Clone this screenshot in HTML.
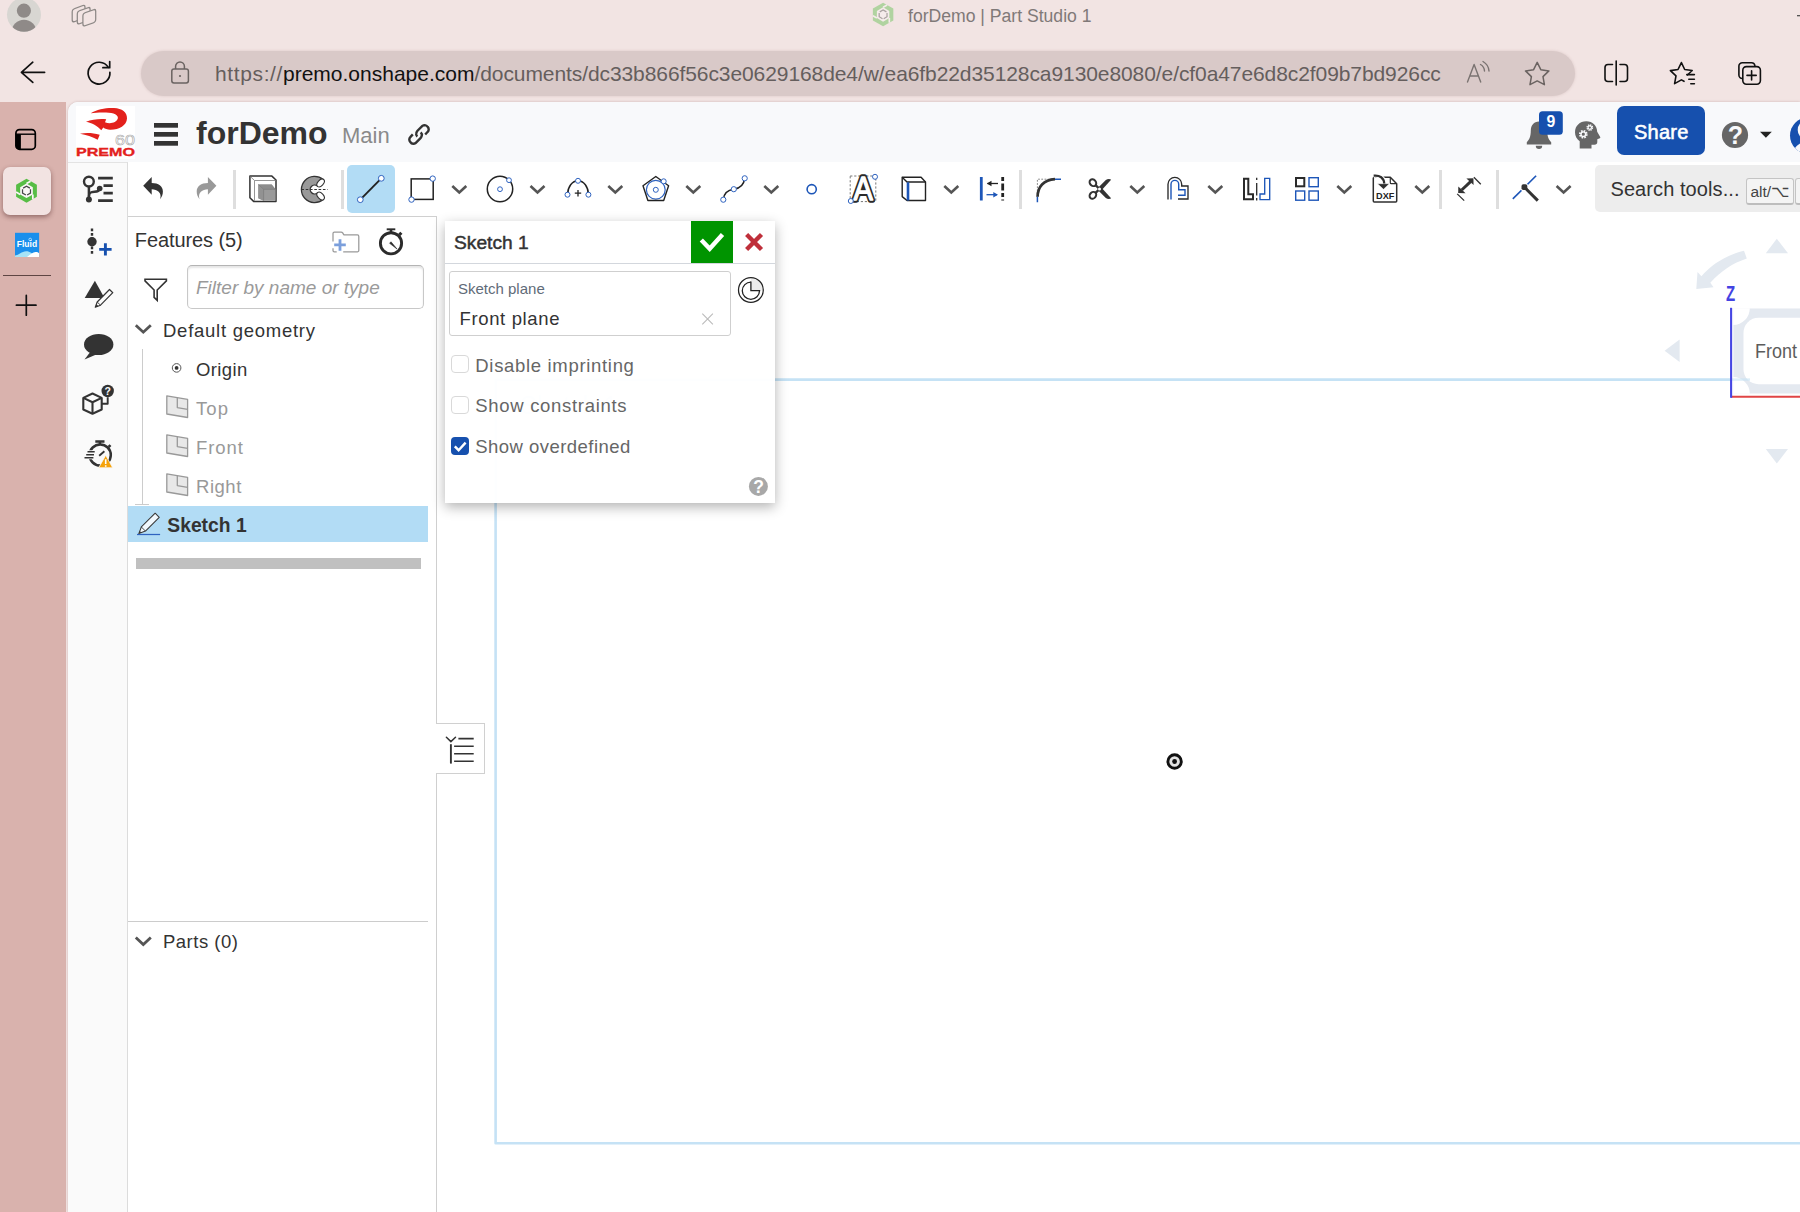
<!DOCTYPE html>
<html lang="en">
<head>
<meta charset="utf-8">
<title>forDemo | Part Studio 1</title>
<style>
html,body{margin:0;padding:0;background:#f2e4e3;}
body{width:1800px;height:1212px;overflow:hidden;position:relative;font-family:"Liberation Sans",sans-serif;color:#333;}
.a{position:absolute;}
.t{position:absolute;white-space:nowrap;line-height:1;}
#ov{position:absolute;left:0;top:0;width:1800px;height:1212px;pointer-events:none;}
</style>
</head>
<body>
<!-- ===== browser chrome ===== -->
<div class="a" id="urlbar" style="left:141px;top:51px;width:1434px;height:45px;border-radius:23px;background:#d9c9c8;box-shadow:0 0 3px rgba(120,80,80,.18)"></div>
<div class="t" id="url" style="left:215px;top:63px;font-size:21px;color:#655e5d"><span style="letter-spacing:.62px">https://</span><span style="color:#111">premo.onshape.com</span><span style="letter-spacing:-.085px">/documents/dc33b866f56c3e0629168de4/w/ea6fb22d35128ca9130e8080/e/cf0a47e6d8c2f09b7bd926cc</span></div>
<div class="t" id="tabtitle" style="left:908px;top:7.700px;font-size:17.600px;color:#807978">forDemo | Part Studio 1</div>

<!-- ===== left browser sidebar ===== -->
<div class="a" style="left:0;top:102px;width:66px;height:1110px;background:#d9b2ad"></div>
<div class="a" style="left:66px;top:102px;width:4px;height:1110px;background:#f2e4e3"></div>
<div class="a" id="acttab" style="left:3px;top:167px;width:48px;height:48px;border-radius:7px;background:#f2e3e2;box-shadow:0 2px 5px rgba(60,20,20,.45)"></div>
<div class="a" style="left:3px;top:274.700px;width:48px;height:1.200px;background:#5e4543"></div>

<!-- ===== page ===== -->
<div class="a" id="page" style="left:68px;top:102px;width:1732px;height:1110px;background:#fff;border-top-left-radius:10px;box-shadow:0 0 2.500px rgba(90,40,40,.28)"></div>
<div class="a" id="hdr" style="left:68px;top:102px;width:1732px;height:60px;background:#f8f9fb;border-top-left-radius:10px"></div>
<div class="a" id="logo" style="left:76px;top:106px;width:59px;height:53px;background:#fff"></div>
<div class="t" id="docname" style="left:196px;top:116.500px;font-size:32px;font-weight:700;color:#333">forDemo</div>
<div class="t" id="branch" style="left:342px;top:125px;font-size:22px;color:#8a8a8a">Main</div>
<div class="a" id="share" style="left:1617px;top:106px;width:88px;height:49px;border-radius:7px;background:#1650ae"></div>
<div class="t" id="sharet" style="left:1634px;top:122px;font-size:20px;font-weight:400;color:#fff;-webkit-text-stroke:.55px #fff;letter-spacing:.25px">Share</div>

<!-- side toolbar -->
<div class="a" id="sidebar" style="left:68px;top:162px;width:59px;height:1050px;background:#fafafa;border-top:1px solid #e3e3e3;border-right:1px solid #dcdcdc;box-sizing:content-box"></div>

<!-- toolbar -->
<div class="a" style="left:233px;top:170px;width:2.700px;height:39px;background:#dedede"></div>
<div class="a" style="left:341px;top:170px;width:2.700px;height:39px;background:#dedede"></div>
<div class="a" style="left:1019px;top:170px;width:2.700px;height:39px;background:#dedede"></div>
<div class="a" style="left:1439px;top:170px;width:2.700px;height:39px;background:#dedede"></div>
<div class="a" style="left:1496px;top:170px;width:2.700px;height:39px;background:#dedede"></div>
<div class="a" id="linetool" style="left:347px;top:165px;width:48px;height:48px;border-radius:5px;background:#b2dcf5"></div>
<div class="a" id="search" style="left:1595px;top:165px;width:215px;height:47px;border-radius:5px;background:#ededed"></div>
<div class="t" id="searcht" style="left:1610.500px;top:179px;font-size:20px;color:#333;letter-spacing:.08px">Search tools...</div>
<div class="a" id="kbd1" style="left:1746px;top:177.700px;width:47.500px;height:27.500px;border-radius:3px;background:#f4f4f4;border:1px solid #c4c4c4;border-bottom:2px solid #bdbdbd;box-sizing:border-box"></div>
<div class="t" id="kbdt" style="left:1750.500px;top:183.500px;font-size:15.500px;color:#444">alt/⌥</div>
<div class="a" id="kbd2" style="left:1795px;top:177.700px;width:20px;height:27.500px;border-radius:3px;background:#f4f4f4;border:1px solid #c4c4c4;border-bottom:2px solid #bdbdbd;box-sizing:border-box"></div>

<!-- feature panel -->
<div class="a" id="fpanel" style="left:128px;top:216px;width:308px;height:996px;background:#fff;border-top:1px solid #d0d0d0;border-right:1px solid #cfcfcf"></div>
<div class="t" id="feat" style="left:134.800px;top:230px;font-size:20px;color:#333;letter-spacing:-.1px">Features (5)</div>
<div class="a" id="filter" style="left:187px;top:265px;width:237px;height:44px;box-sizing:border-box;border:1.500px solid #c8c8c8;border-top-color:#b4b4b4;border-radius:5px;background:#fff;box-shadow:inset 0 2px 2px rgba(0,0,0,.10)"></div>
<div class="t" id="filtert" style="left:196px;top:278px;font-size:19px;font-style:italic;color:#9a9a9a">Filter by name or type</div>
<div class="t" id="defgeo" style="left:163px;top:321.500px;font-size:18.500px;color:#333;letter-spacing:.74px">Default geometry</div>
<div class="a" style="left:142px;top:349px;width:1px;height:156px;background:#ccc"></div>
<div class="a" style="left:135px;top:504px;width:14px;height:1px;background:#ccc"></div>
<div class="t" id="origin" style="left:196px;top:360.900px;font-size:18.500px;color:#333;letter-spacing:.38px">Origin</div>
<div class="t" id="ptop" style="left:196px;top:399.800px;font-size:18.500px;color:#999;letter-spacing:1.100px">Top</div>
<div class="t" id="pfront" style="left:196px;top:438.900px;font-size:18.500px;color:#999;letter-spacing:.9px">Front</div>
<div class="t" id="pright" style="left:196px;top:478px;font-size:18.500px;color:#999;letter-spacing:.53px">Right</div>
<div class="a" id="selrow" style="left:128px;top:506px;width:300px;height:36px;background:#b2dcf5"></div>
<div class="t" id="sk1" style="left:167.300px;top:515.600px;font-size:19.300px;font-weight:700;color:#333">Sketch 1</div>
<div class="a" id="gbar" style="left:136px;top:558px;width:285px;height:11px;background:#c0c0c0"></div>
<div class="a" style="left:128px;top:921px;width:300px;height:1px;background:#ccc"></div>
<div class="t" id="parts" style="left:163px;top:933.200px;font-size:18.500px;color:#333;letter-spacing:.49px">Parts (0)</div>
<div class="a" id="tabbtn" style="left:436px;top:723px;width:49px;height:51px;box-sizing:border-box;border:1px solid #d0d0d0;border-left:none;background:#fff"></div>

<svg class="a" style="left:0;top:0" width="1800" height="1212" viewBox="0 0 1800 1212" fill="none">
<!-- ===== canvas ===== -->
<g id="canvas">
  <path d="M1731 379.600H495.600V1143.300H1800" stroke="#c5e2f5" stroke-width="2.600" stroke-linejoin="round"/>
  <text x="520" y="414" font-family="Liberation Sans, sans-serif" font-size="25" fill="#bfdff5">Sketch 1</text>
  <circle cx="1174.600" cy="761.500" r="6.700" stroke="#111" stroke-width="2.900" fill="#e4e4e4"/>
  <circle cx="1174.600" cy="761.500" r="2.400" fill="#111"/>
</g>
<!-- ===== view cube ===== -->
<g id="viewcube">
  <path d="M1776.800 238.800l11.200 14.400h-22.200z" fill="#e3e9f0"/>
  <path d="M1776.800 463.600l11.200-14.600h-22.200z" fill="#e3e9f0"/>
  <path d="M1664.600 350.800l15-11.200v22.400z" fill="#e3e9f0"/>
  <path d="M1744 250.800l2.800 7.600c-14 4.600-26 12.500-36.500 24.300l3.200 4.600-17.200 1.700 1.200-17 3.900 4.300c10.500-12.200 25-21.300 42.600-25.500z" fill="#e3e9f0"/>
  <clipPath id="vcclip"><rect x="1733.200" y="308.300" width="80" height="85.400"/></clipPath>
  <g clip-path="url(#vcclip)">
    <rect x="1733.200" y="308.300" width="90" height="85.400" fill="#e4e9f0"/>
    <circle cx="1733.200" cy="308.300" r="16.600" fill="#fff"/>
    <circle cx="1733.200" cy="393.700" r="16.600" fill="#fff"/>
    <rect x="1743.500" y="317.800" width="90" height="66.400" rx="15" fill="#fff"/>
  </g>
  <path d="M1731 379.600h19" stroke="#c5e2f5" stroke-width="2.400" opacity=".6"/>
  <path d="M1731 396.700h70" stroke="#e04545" stroke-width="2.100"/>
  <path d="M1731.100 307.800V397.800" stroke="#4646e3" stroke-width="2.100"/>
</g>
</svg>
<!-- sketch dialog -->
<div class="a" id="dlg" style="left:445px;top:221px;width:330px;height:282px;background:rgba(255,255,255,.96);box-shadow:0 4px 12px rgba(0,0,0,.3)"></div>
<div class="a" style="left:445px;top:263px;width:330px;height:1px;background:#d3d7dd"></div>
<div class="t" id="dlgt" style="left:454px;top:233.400px;font-size:19.200px;color:#333;-webkit-text-stroke:.45px #333">Sketch 1</div>
<div class="a" id="okbtn" style="left:691px;top:221px;width:42px;height:42px;background:#009400"></div>
<div class="a" id="spbox" style="left:449px;top:271px;width:282px;height:65px;box-sizing:border-box;border:1px solid #cfcfcf;border-radius:3px;background:#fff"></div>
<div class="t" id="splabel" style="left:458px;top:281px;font-size:15px;color:#5f6b78">Sketch plane</div>
<div class="t" id="spval" style="left:459.500px;top:309.800px;font-size:18.500px;color:#333;letter-spacing:.64px">Front plane</div>
<div class="a" style="left:451px;top:355px;width:18px;height:18px;box-sizing:border-box;border:1px solid #d9d9d9;border-radius:4px;background:#fff"></div>
<div class="a" style="left:451px;top:396px;width:18px;height:18px;box-sizing:border-box;border:1px solid #d9d9d9;border-radius:4px;background:#fff"></div>
<div class="a" style="left:451px;top:437px;width:18px;height:18px;border-radius:4px;background:#1650ae"></div>
<div class="t" id="cb1" style="left:475.300px;top:356.500px;font-size:18.5px;color:#666;letter-spacing:.68px">Disable imprinting</div>
<div class="t" id="cb2" style="left:475.300px;top:397.200px;font-size:18.5px;color:#666;letter-spacing:.69px">Show constraints</div>
<div class="t" id="cb3" style="left:475.300px;top:438px;font-size:18.5px;color:#666;letter-spacing:.46px">Show overdefined</div>

<!-- view cube text -->
<div class="t" id="zlab" style="left:1726px;top:283px;font-size:22px;font-weight:700;color:#4343e2;transform-origin:0 0;transform:scaleX(.68)">Z</div>
<div class="t" id="frontlab" style="left:1755px;top:341px;font-size:20px;color:#5c5c5c;transform-origin:0 0;transform:scaleX(.9)">Front</div>

<svg id="ov" viewBox="0 0 1800 1212" fill="none">
<!-- ===== browser chrome icons ===== -->
<g id="i-avatar">
  <clipPath id="avc"><circle cx="24" cy="14.700" r="17"/></clipPath>
  <circle cx="24" cy="14.700" r="17" fill="#d8d6d2"/>
  <g clip-path="url(#avc)" fill="#8f8a88">
    <circle cx="23.900" cy="10.700" r="7.100"/>
    <ellipse cx="24" cy="31.800" rx="12.300" ry="12"/>
  </g>
</g>
<g id="i-workspaces" stroke="#8d8886" stroke-width="1.250" fill="#f2e4e3">
  <g transform="translate(72.200 9.400) skewY(-19.800)"><rect x="0" y="0" width="12.800" height="13" rx="2.400"/></g>
  <g transform="translate(77.300 11.500) skewY(-19.800)"><rect x="0" y="0" width="12.800" height="13" rx="2.400"/></g>
  <g transform="translate(82.900 13.500) skewY(-19.800)"><rect x="0" y="0" width="12.800" height="13" rx="2.400"/></g>
</g>
<g id="i-back" stroke="#111" stroke-width="1.700" stroke-linecap="round" stroke-linejoin="round" fill="none">
  <path d="M44.600 72.300H21.500M32.800 62.200L21.400 72.300l11.400 10.100"/>
</g>
<g id="i-refresh" stroke="#111" stroke-width="1.700" stroke-linecap="round" stroke-linejoin="round" fill="none">
  <path d="M108.300 67.400A10.900 10.900 0 1 0 109.900 72.300"/>
  <path d="M109.700 61.600v6.100h-6.800"/>
</g>
<g id="i-lock" stroke="#6a6361" stroke-width="1.5" stroke-linejoin="round">
  <rect x="171.8" y="68.9" width="16.6" height="14" rx="2.2"/>
  <path d="M175.6 68.9v-2.6a4.4 4.4 0 0 1 8.8 0v2.6"/>
  <circle cx="180" cy="76" r="1.1" fill="#6a6361" stroke="none"/>
</g>
<g id="i-readaloud" stroke="#7a7371" stroke-width="1.4" stroke-linecap="round" stroke-linejoin="round">
  <path d="M1467.5 82l6.6-17.5 6.6 17.5M1469.8 76h8.6"/>
  <path d="M1480.5 64.5a8 8 0 0 1 4 6.5M1483 61.5a12 12 0 0 1 6 9.5"/>
</g>
<g id="i-star" stroke="#6a6361" stroke-width="1.5" stroke-linejoin="round">
  <path d="M1537.2 62.300l3.600 7.400 8.100 1.200-5.900 5.700 1.400 8.100-7.200-3.800-7.200 3.800 1.400-8.100-5.900-5.700 8.100-1.200z"/>
</g>
<g id="i-split" stroke="#111" stroke-width="1.6" stroke-linecap="round" stroke-linejoin="round">
  <path d="M1612.5 64.5h-4.5a3 3 0 0 0-3 3v11a3 3 0 0 0 3 3h4.5M1620 64.5h4.500a3 3 0 0 1 3 3v11a3 3 0 0 1-3 3H1620"/>
  <path d="M1616.2 61v24"/>
</g>
<g id="i-favs" stroke="#111" stroke-width="1.600" stroke-linecap="round" stroke-linejoin="round">
  <path d="M1681.400 62.600l3.300 6.900 7.500 1-4.800 4.500M1681.400 62.600l-3.400 6.900-7.600 1.100 5.600 5.300-1.400 7.700 6.800-3.700 2.600 1.400"/>
  <path d="M1686.800 74.600h7.600M1688.800 79.200h5.600M1690.800 83.800h3.600"/>
</g>
<g id="i-colls" stroke="#111" stroke-width="1.6" stroke-linecap="round" stroke-linejoin="round">
  <path d="M1742.300 78.500a3.400 3.400 0 0 1-3.400-3.400v-9a3.400 3.400 0 0 1 3.400-3.400h9.200a3.400 3.400 0 0 1 3.400 3.100"/>
  <rect x="1742.800" y="66.600" width="17.600" height="17.600" rx="3.600"/>
  <path d="M1751.600 70.800v9.200M1747 75.400h9.200"/>
</g>
<path d="M1797 15.700h6" stroke="#444" stroke-width="1.200"/>
<!-- tab favicon (faded) -->
<g id="i-tabfav" transform="translate(883.100 14.500) scale(1.146)" opacity=".42">
  <path d="M0.00 -10.30L8.92 -5.15L8.92 5.15L0.00 10.30L-8.92 5.15L-8.92 -5.15Z" fill="#57bd45"/>
  <path d="M0.00 -6.27L5.43 -3.13L5.43 3.13L0.00 6.27L-5.43 3.13L-5.43 -3.13Z" fill="#fbf6f6"/>
  <path d="M0.00 -6.27 L3.49 -8.28M-5.43 3.13 L-8.92 1.12M5.43 3.13 L5.43 7.17" stroke="#fbf6f6" stroke-width="1.46" fill="none"/>
  <path d="M3.42 -1.38 L3.42 1.97 L0.51 3.65 M-0.51 3.65 L-3.42 1.97 L-3.42 -1.38 M-2.91 -2.27 L0.00 -3.95 L2.91 -2.27" stroke="#484848" stroke-width="1.07" fill="none" stroke-linejoin="miter"/>
</g>
<!-- ===== left sidebar icons ===== -->
<g id="i-vtabs">
  <rect x="15.900" y="129.600" width="19.400" height="19.700" rx="3.600" stroke="#000" stroke-width="1.700"/>
  <path d="M15.900 134.200h19.400" stroke="#000" stroke-width="1.400"/>
  <path d="M15.900 134.200h5v15.100h-1.400a3.600 3.600 0 0 1-3.600-3.600z" fill="#000"/>
</g>
<g id="i-onshape" transform="translate(26.5 190.8)">
  <path d="M0.00 -12.00L10.39 -6.00L10.39 6.00L0.00 12.00L-10.39 6.00L-10.39 -6.00Z" fill="#57bd45"/>
  <path d="M0.00 -7.30L6.32 -3.65L6.32 3.65L0.00 7.30L-6.32 3.65L-6.32 -3.65Z" fill="#fbf6f6"/>
  <path d="M0.00 -7.30 L4.07 -9.65M-6.32 3.65 L-10.39 1.30M6.32 3.65 L6.32 8.35" stroke="#fbf6f6" stroke-width="1.70" fill="none"/>
  <path d="M3.98 -1.61 L3.98 2.30 L0.60 4.25 M-0.60 4.25 L-3.98 2.30 L-3.98 -1.61 M-3.39 -2.64 L0.00 -4.60 L3.39 -2.64" stroke="#484848" stroke-width="1.25" fill="none" stroke-linejoin="miter"/>
</g>
<g id="i-fluid">
  <rect x="15" y="232.800" width="24.100" height="24.200" fill="#1a8fec"/>
  <path d="M15 255.600c4-.5 6.500-4.200 11.200-4.300 4 0 6 2.600 9 4.200l1 1.500H15z" fill="#a6e3f7"/>
  <path d="M27 257c2.500-1.500 5-4.800 8.600-5 1.500-.1 2.600.5 3.500 1.200V257z" fill="#fff"/>
  <circle cx="30.200" cy="239.500" r="1.300" fill="none" stroke="#d8efff" stroke-width=".7"/>
  <text x="16.800" y="247.100" font-family="Liberation Sans, sans-serif" font-size="8.400" font-weight="700" fill="#fff" textLength="20.300" lengthAdjust="spacingAndGlyphs">Fluid</text>
</g>
<g id="i-plus" stroke="#111" stroke-width="1.700" stroke-linecap="round">
  <path d="M16.400 305.200h19.600M26.300 295.400v19.800"/>
</g>

<!-- ===== header icons ===== -->
<g id="i-logo">
  <path d="M90.7 113.200C97 109.500 106 107.600 114 108c8 .4 13.300 4 13 10.500-.4 7-8 11.500-17 11.300-2.500-.1-5-.8-6.700-2.200l-2 2.700C97.500 126 92 122.800 86 121.800c6-2.300 13-3.300 20.200-2.600l-1.200 3c4.500 2.100 11.500.8 12.800-3.600 1-3.600-3.800-5.800-11.800-6.100-5.500-.2-11 .1-15.300.7z" fill="#e3211c"/>
  <path d="M80 133.700c6-1.200 13-.9 19.700 1l-2 5.100c-5.200-3-11.700-5.200-17.700-6.100z" fill="#e3211c"/>
  <text x="115" y="145.200" font-family="Liberation Sans, sans-serif" font-size="14.500" font-weight="400" fill="#fff" stroke="#a9a9a9" stroke-width=".55" textLength="20" lengthAdjust="spacingAndGlyphs">60</text>
  <text x="76" y="155.700" font-family="Liberation Sans, sans-serif" font-size="11.800" font-weight="700" fill="#e3211c" stroke="#e3211c" stroke-width=".35" textLength="59" lengthAdjust="spacingAndGlyphs">PREMO</text>
</g>
<g id="i-burger" fill="#333">
  <rect x="154" y="123" width="24" height="4.700"/><rect x="154" y="132" width="24" height="4.700"/><rect x="154" y="141" width="24" height="4.700"/>
</g>
<g id="i-link" stroke="#333" stroke-width="2.400" fill="none"><path d="M417.300 136.600C416.400 135.700 415.900 134.600 416.200 133.500C416.400 132.500 416.800 131.500 417.500 130.700L422.400 125.900C423.100 125.300 424 125.100 424.800 125.100C426 125.200 427 125.900 427.700 126.900C428.400 127.700 428.700 128.600 428.700 129.500C428.700 130.400 428.300 131.200 427.700 131.800L425.200 134.500"/><path d="M417.300 136.600C416.400 135.700 415.900 134.600 416.200 133.500C416.400 132.500 416.800 131.500 417.500 130.700L422.400 125.900C423.100 125.300 424 125.100 424.800 125.100C426 125.200 427 125.900 427.700 126.900C428.400 127.700 428.700 128.600 428.700 129.500C428.700 130.400 428.300 131.200 427.700 131.800L425.200 134.500" transform="rotate(180 419 134.450)"/></g>
<g id="i-bell" fill="#666">
  <path d="M1539 121.500c-5.200 0-8.200 4-8.200 9.300 0 6-1.800 9.200-4 11.400v2.300h24.400v-2.300c-2.200-2.200-4-5.400-4-11.400 0-5.300-3-9.300-8.200-9.300z"/>
  <path d="M1535.800 145.800a3.200 3.200 0 0 0 6.400 0z"/>
</g>
<rect x="1539" y="111.200" width="23.800" height="23.500" rx="3.500" fill="#1650ae"/>
<text x="1551" y="127" font-family="Liberation Sans, sans-serif" font-size="15.800" font-weight="700" fill="#fff" text-anchor="middle">9</text>
<g id="i-head">
  <path d="M1586.300 121.300c-6.600 0-11.300 4.800-11.300 10.900 0 4 1.900 7 4.700 9v7.200h11.800v-3.600h3c1.700 0 2.800-1.100 2.800-2.800v-2.800l2.500-1c.5-.2.700-.8.400-1.300l-3-5.200c-.2-6-4.500-10.400-10.900-10.400z" fill="#666"/>
  <g stroke="#f8f9fb" fill="none">
    <circle cx="1583.300" cy="134.200" r="3.200" stroke-width="2.300" stroke-dasharray="1.500 1.010"/>
    <circle cx="1583.300" cy="134.200" r="2.300" stroke-width="1.400"/>
    <circle cx="1589.800" cy="127.600" r="2.500" stroke-width="1.800" stroke-dasharray="1.200 .760"/>
    <circle cx="1589.800" cy="127.600" r="1.700" stroke-width="1.100"/>
  </g>
</g>
<g id="i-help">
  <circle cx="1735" cy="135" r="13.100" fill="#666"/>
  <text x="1735.300" y="144.300" font-family="Liberation Sans, sans-serif" font-size="25" font-weight="700" fill="#f8f9fb" text-anchor="middle">?</text>
  <path d="M1760 131.800h11.800l-5.900 6z" fill="#222"/>
</g>
<g id="i-user">
  <clipPath id="uclip"><circle cx="1808" cy="135.500" r="18"/></clipPath>
  <circle cx="1808" cy="135.500" r="18" fill="#1650ae"/>
  <g clip-path="url(#uclip)" fill="#f8f9fb"><circle cx="1808" cy="130" r="10.300"/><ellipse cx="1808" cy="157" rx="16" ry="15.500"/></g>
</g>

<!-- ===== toolbar icons ===== -->
<g id="tb-undo"><path d="M143.200 185.800L151.700 177.100V183.100C158.500 183.100 162.900 186.500 162.900 191.500C162.900 194.500 161.800 197.300 160 199.200C161.200 196 160.500 193.500 158.700 191.800C157 190 154.500 189.200 151.700 189.200V194.700Z" fill="#333"/></g>
<g id="tb-redo" transform="translate(359.600 0) scale(-1 1)"><path d="M143.200 185.800L151.700 177.100V183.100C158.500 183.100 162.900 186.500 162.900 191.500C162.900 194.500 161.800 197.300 160 199.200C161.200 196 160.500 193.500 158.700 191.800C157 190 154.500 189.200 151.700 189.200V194.700Z" fill="#999"/></g>
<g id="tb-cube" stroke-linejoin="round">
  <path d="M249.900 176.100H271.900L276 180V201.400H253.600L249.900 197.800Z" fill="#fff" stroke="#333" stroke-width="1.500"/>
  <path d="M250.400 176.600L254.500 180.500H275.500M254.500 180.500V200.800" fill="none" stroke="#8a8a8a" stroke-width=".9"/>
  <path d="M258.300 184.400H271.700L275.400 188.900V200.800H263.600L258.300 198.300Z" fill="#9a9a9a"/>
  <path d="M258.300 184.400H271.700L275.400 189.200H263.600Z" fill="#8c8c8c"/>
  <path d="M258.300 184.400L263.600 189.300V200.800L258.300 198.300Z" fill="#929292"/>
  <path d="M258.300 184.400L263.600 189.300H275.400M263.600 189.300V200.800" fill="none" stroke="#7a7a7a" stroke-width=".7"/>
</g>
<g id="tb-section">
  <path d="M323.100 179.400A13.200 13.200 0 1 0 323.100 199.600L317.400 192.900A4.400 4.400 0 1 1 317.400 186.100Z" fill="#999" stroke="#333" stroke-width="1.300" stroke-linejoin="round"/>
  <ellipse cx="320.600" cy="182.900" rx="4.600" ry="2.800" transform="rotate(-48 320.600 182.900)" fill="#fff" stroke="#333" stroke-width="1.100"/>
  <ellipse cx="320.600" cy="196.100" rx="4.600" ry="2.800" transform="rotate(48 320.600 196.100)" fill="#fff" stroke="#333" stroke-width="1.100"/>
  <path d="M301.400 189.500h26.300" stroke="#333" stroke-width="1.200" stroke-dasharray="2.600 1.700"/>
</g>
<g id="tb-line">
  <path d="M360.300 199.700L381.300 178.300" stroke="#222" stroke-width="1.900"/>
  <circle cx="360.300" cy="199.700" r="2.900" fill="#fff" stroke="#2f63c0" stroke-width="1"/>
  <circle cx="381.300" cy="178.300" r="2.900" fill="#fff" stroke="#2f63c0" stroke-width="1"/>
</g>
<g id="tb-rect">
  <rect x="411.200" y="178.900" width="22" height="20.500" stroke="#222" stroke-width="1.500"/>
  <circle cx="411.500" cy="199.600" r="2.700" fill="#fff" stroke="#2f63c0" stroke-width="1"/>
  <circle cx="432.700" cy="178.600" r="2.700" fill="#fff" stroke="#2f63c0" stroke-width="1"/>
</g>
<g id="tb-circle">
  <circle cx="500" cy="189" r="12.700" stroke="#222" stroke-width="1.500"/>
  <circle cx="500" cy="189.200" r="2.400" fill="#fff" stroke="#2f63c0" stroke-width="1"/>
  <circle cx="509" cy="180.200" r="2.400" fill="#fff" stroke="#2f63c0" stroke-width="1"/>
</g>
<g id="tb-arc">
  <path d="M567.600 194.500A10.400 13.700 0 0 1 588.400 194.500" stroke="#222" stroke-width="1.500"/>
  <path d="M578 190v6.400M574.800 193.200h6.400" stroke="#222" stroke-width="1.300"/>
  <circle cx="567.500" cy="194.700" r="2.500" fill="#fff" stroke="#2f63c0" stroke-width="1"/>
  <circle cx="588.400" cy="194.700" r="2.500" fill="#fff" stroke="#2f63c0" stroke-width="1"/>
  <circle cx="578" cy="180.800" r="2.500" fill="#fff" stroke="#2f63c0" stroke-width="1"/>
</g>
<g id="tb-poly">
  <circle cx="655.800" cy="189.800" r="9.400" stroke="#2f63c0" stroke-width="1.200"/>
  <path d="M655.800 176.500l12.800 9.300-4.900 14.700h-15.800l-4.900-14.700z" stroke="#222" stroke-width="1.400" stroke-linejoin="round"/>
  <circle cx="655.800" cy="189.800" r="2.500" fill="#fff" stroke="#2f63c0" stroke-width="1"/>
  <circle cx="663.700" cy="181.300" r="2.500" fill="#fff" stroke="#2f63c0" stroke-width="1"/>
</g>
<g id="tb-spline">
  <path d="M723.300 199.700c.5-7 5-9.800 10.500-10.500 5.500-.8 10-3.500 10.900-10.900" stroke="#222" stroke-width="1.500"/>
  <circle cx="723.300" cy="199.700" r="2.600" fill="#fff" stroke="#2f63c0" stroke-width="1"/>
  <circle cx="733.800" cy="189.200" r="2.600" fill="#fff" stroke="#2f63c0" stroke-width="1"/>
  <circle cx="744.700" cy="178.300" r="2.600" fill="#fff" stroke="#2f63c0" stroke-width="1"/>
</g>
<circle id="tb-point" cx="811.700" cy="189.200" r="4.600" stroke="#1d56b8" stroke-width="1.600"/>
<g id="tb-text">
  <rect x="850.200" y="176" width="25.600" height="25.600" stroke="#777" stroke-width="1" stroke-dasharray="2.200 1.800" fill="none"/>
  <text x="863.100" y="200.200" font-family="Liberation Sans, sans-serif" font-size="33.500" font-weight="400" fill="#2a2a2a" stroke="#2a2a2a" stroke-width="5.300" stroke-linejoin="round" text-anchor="middle" textLength="19.400" lengthAdjust="spacingAndGlyphs">A</text>
  <text x="863.100" y="200.200" font-family="Liberation Sans, sans-serif" font-size="33.500" font-weight="400" fill="#fff" stroke="#fff" stroke-width="1.300" stroke-linejoin="round" text-anchor="middle" textLength="19.400" lengthAdjust="spacingAndGlyphs">A</text>
  <circle cx="875" cy="176.800" r="2.500" fill="#fff" stroke="#2f63c0" stroke-width="1"/>
  <circle cx="850.800" cy="201" r="2.500" fill="#fff" stroke="#2f63c0" stroke-width="1"/>
</g>
<g id="tb-use" stroke="#222" stroke-width="1.400" stroke-linejoin="round">
  <path d="M902.200 177.300h18.900l4.400 4.700v18.500h-18.500l-4.800-3.900z" fill="#fff"/>
  <path d="M902.200 177.300l4.800 4.700h18.500" fill="none"/>
  <path d="M908 182.300v18.200" stroke="#1d56b8" stroke-width="2.600"/>
</g>
<g id="tb-transform">
  <path d="M981.300 177v23.500" stroke="#1d56b8" stroke-width="2.800"/>
  <path d="M1002.700 177v23.500" stroke="#222" stroke-width="2.800" stroke-dasharray="4 2.500 7 2.500"/>
  <path d="M998 183.500h-10.500" stroke="#222" stroke-width="1.300"/><path d="M986.800 183.500l4.700-2.800v5.600z" fill="#222"/>
  <path d="M986.500 194.700h10.500" stroke="#1d56b8" stroke-width="1.300"/><path d="M998 194.700l-4.700-2.800v5.600z" fill="#1d56b8"/>
</g>
<g id="tb-fillet">
  <path d="M1037.400 194.500V179.200H1053" stroke="#888" stroke-width="1" stroke-dasharray="1.800 1.400"/>
  <path d="M1037.400 202.300v-5.800M1055 179.300h6" stroke="#1d56b8" stroke-width="1.500"/>
  <path d="M1037.600 196.800c0-10 6-17 17.400-17.600" stroke="#333" stroke-width="2.700"/>
</g>
<g id="tb-trim" fill="#333">
  <path d="M1097.600 188.200L1105.800 180C1107.600 178.700 1110.200 178.800 1111.100 179.800L1102.700 189 1100.300 191.600Z"/>
  <path d="M1097.600 189.800L1105.800 198C1107.600 199.300 1110.200 199.200 1111.100 198.200L1102.700 189 1100.300 186.400Z"/>
  <g fill="none" stroke="#333" stroke-width="2">
    <ellipse cx="1092.900" cy="182.700" rx="3" ry="3.700" transform="rotate(-42 1092.900 182.700)"/>
    <ellipse cx="1092.900" cy="195.300" rx="3" ry="3.700" transform="rotate(42 1092.900 195.300)"/>
    <path d="M1095.800 185.400l3.400 3.200M1095.800 192.600l3.400-3.200" stroke-width="2.300"/>
  </g>
  <circle cx="1099.500" cy="189" r="1.500" fill="#fff"/>
</g>
<g id="tb-offset" fill="none">
  <path d="M1168 199.400V184.200a6.850 6.850 0 0 1 13.700 0v1.800h6.300v13h-10" stroke="#2a2a2a" stroke-width="1.350"/>
  <path d="M1171 199.400V184.200a3.850 3.850 0 0 1 7.700 0v5.500h6.300v5.600h-7" stroke="#1d56b8" stroke-width="1.400"/>
</g>
<g id="tb-mirror" fill="none">
  <path d="M1244 178.700h4.300v15.600h4.700v5h-9z" stroke="#2a2a2a" stroke-width="2"/>
  <path d="M1256.700 177.700v2.300M1256.700 183v12.500M1256.700 198v2.500" stroke="#2a2a2a" stroke-width="1.300"/>
  <path d="M1269.700 178.400h-5v15.600h-4.700v5.600h9.700z" stroke="#1d56b8" stroke-width="1.350"/>
</g>
<g id="tb-pattern" fill="none">
  <rect x="1296" y="178" width="8.300" height="8.300" stroke="#2a2a2a" stroke-width="2"/>
  <rect x="1309" y="177.700" width="9.300" height="9" stroke="#1d56b8" stroke-width="1.400"/>
  <rect x="1295.700" y="191" width="9" height="9.200" stroke="#1d56b8" stroke-width="1.400"/>
  <rect x="1309" y="191" width="9.300" height="9.200" stroke="#1d56b8" stroke-width="1.400"/>
</g>
<g id="tb-dxf">
  <path d="M1374.300 177.300h16l6.400 6.400v17.300a1 1 0 0 1-1 1h-21.400a1 1 0 0 1-1-1v-22.700a1 1 0 0 1 1-1z" stroke="#2f2f2f" stroke-width="1.500" stroke-linejoin="round" fill="#fff"/>
  <path d="M1390.300 177.300v5.400a1 1 0 0 0 1 1h5.400" stroke="#2f2f2f" stroke-width="1.200" fill="none"/>
  <path d="M1373.700 175.700c6-.6 10.400 2 10.600 8.300" stroke="#fff" stroke-width="4.500" fill="none"/>
  <path d="M1373.700 175.700c6-.6 10.400 2 10.600 8.300" stroke="#2f2f2f" stroke-width="2.300" fill="none"/>
  <path d="M1377.500 183.700h11.800l-5.800 5.600z" fill="#2f2f2f" stroke="#fff" stroke-width=".5"/>
  <text x="1385.200" y="199.400" font-family="Liberation Sans, sans-serif" font-size="9.800" font-weight="700" fill="#222" text-anchor="middle" textLength="18.300" lengthAdjust="spacingAndGlyphs">DXF</text>
</g>
<g id="tb-dim">
  <path d="M1461.700 190l8.900-8.300" stroke="#333" stroke-width="3"/>
  <path d="M1473.400 178.200l.2 6.800-7.200-6.500z" fill="#333"/>
  <path d="M1458.200 192.900l.1-6.500 7.300 6.900z" fill="#333"/>
  <path d="M1473.900 177.200l6.900 7M1457.200 193.900l7 6.700" stroke="#333" stroke-width="1.300"/>
</g>
<g id="tb-coinc">
  <path d="M1512.800 198.900l23.300-23.100" stroke="#1d56b8" stroke-width="1.600"/>
  <circle cx="1524.400" cy="187.200" r="4.300" fill="#fff"/>
  <path d="M1525.500 188.200l12.300 12.400" stroke="#333" stroke-width="3"/>
  <rect x="1521.500" y="184.300" width="5.800" height="5.800" rx="1.800" fill="#333"/>
</g>
<g id="tb-chev" stroke="#555" stroke-width="2.600" stroke-linejoin="miter">
  <path d="M452.300 186l7 6.500 7-6.500"/>
  <path d="M530.500 186l7 6.500 7-6.500"/>
  <path d="M608.300 186l7 6.500 7-6.500"/>
  <path d="M686.300 186l7 6.500 7-6.500"/>
  <path d="M764.300 186l7 6.500 7-6.500"/>
  <path d="M944.300 186l7 6.500 7-6.500"/>
  <path d="M1130.300 186l7 6.500 7-6.500"/>
  <path d="M1208.300 186l7 6.500 7-6.500"/>
  <path d="M1337.300 186l7 6.500 7-6.500"/>
  <path d="M1415.300 186l7 6.500 7-6.500"/>
  <path d="M1556.600 186l7 6.500 7-6.500"/>
</g>

<!-- ===== side toolbar icons ===== -->
<g id="sb1" stroke="#333" fill="none">
  <circle cx="88.900" cy="181.600" r="4.900" stroke-width="2.400"/>
  <path d="M88.900 186.500v11" stroke-width="2.500"/>
  <path d="M88.900 196.500c0-4.300 2.600-4.700 5.600-4.800 2.700-.1 4.700-.7 5.100-3" stroke-width="2.400"/>
  <circle cx="88.900" cy="199.500" r="3" fill="#333" stroke="none"/>
  <circle cx="99.700" cy="188.500" r="2.800" fill="#333" stroke="none"/>
  <path d="M98.100 178.200h14.700M103.500 185.600h9.300M103.500 193.100h9.300M98.100 200.700h14.700" stroke-width="2.700"/>
</g>
<g id="sb2">
  <path d="M92 228.600v26.600" stroke="#333" stroke-width="2.400" stroke-dasharray="2.700 1.800"/>
  <circle cx="92" cy="241.700" r="4.700" fill="#333"/>
  <path d="M105.400 243.200v12.400M99.200 249.400h12.400" stroke="#1650ae" stroke-width="2.900"/>
</g>
<g id="sb3">
  <path d="M94.900 280.700l9.600 17.300H84.700z" fill="#333"/>
  <path d="M95.300 307.200l1.900-5.200 12.300-12.500 3.300 3.200-12.300 12.500z" fill="#fafafa" stroke="#333" stroke-width="1.200" stroke-linejoin="round"/>
  <path d="M95.300 307.200l1.100-3 2 1.900z" fill="#333"/>
  <path d="M97.200 302l3.300 3.200" stroke="#333" stroke-width=".9"/>
</g>
<g id="sb4" fill="#333">
  <ellipse cx="98.700" cy="344.500" rx="14.700" ry="10.500"/>
  <path d="M91 351l-6.500 8.500 13-5.500z"/>
</g>
<g id="sb5" stroke="#333" stroke-width="2.100" stroke-linejoin="round" fill="none">
  <path d="M92.500 393.500l9.200 4.400v11.600l-9.200 4.200-9.200-4.200v-11.600z"/>
  <path d="M83.300 397.900l9.200 4.300 9.200-4.300M92.500 402.200v11.500"/>
  <path d="M101.700 403.800h6v-6.500" stroke-width="1.900"/>
  <circle cx="107.700" cy="391" r="6.200" fill="#333" stroke="none"/>
  <text x="107.700" y="395" font-family="Liberation Sans, sans-serif" font-size="10.500" font-weight="700" fill="#fafafa" stroke="none" text-anchor="middle">?</text>
</g>
<g id="sb6">
  <circle cx="100.200" cy="455" r="10.600" stroke="#333" stroke-width="2.500" fill="none"/>
  <path d="M95.300 441.400h9.200M99.900 441.400v3.200M108.600 447l1.900-1.900" stroke="#333" stroke-width="2.500"/>
  <path d="M99.200 455.700l5.200-4.500" stroke="#333" stroke-width="1.900"/>
  <path d="M85.500 451.800h10.200M84.200 454.700h10.800M82.500 457.700h11.900" stroke="#fafafa" stroke-width="2.900"/>
  <path d="M87.500 451.800h7.200M86.200 454.700h7.800M84.500 457.700h8.900" stroke="#333" stroke-width="1.400"/>
  <path d="M105.700 455.200l7 12.600h-14z" fill="#f5a20a" stroke="#fafafa" stroke-width=".8" stroke-linejoin="round"/>
  <path d="M105.700 459.300v4.700M105.700 465.200v1.500" stroke="#fff" stroke-width="1.600"/>
</g>
<!-- ===== feature panel icons ===== -->
<g id="fp-folder">
  <path d="M333 241.400V233.400a1.400 1.400 0 0 1 1.400-1.400h6.700c.8 0 1.200.3 1.600.9l.7 1.200c.3.600.8.900 1.500.900h12.500a1.400 1.400 0 0 1 1.400 1.400v14a1.400 1.400 0 0 1-1.400 1.400H343.200" stroke="#999" stroke-width="1.250" fill="none"/>
  <path d="M333 248.300v2.100a1.400 1.400 0 0 0 1.400 1.400h2.300" stroke="#999" stroke-width="1.250" fill="none"/>
  <path d="M340 239.200v11.500M334.200 244.900h11.600" stroke="#7b9fdc" stroke-width="2.800"/>
</g>
<g id="fp-watch" stroke="#2b2b2b" fill="none">
  <circle cx="391" cy="243.300" r="10.600" stroke-width="2.900"/>
  <path d="M386.700 229.300h8.600" stroke-width="1.900"/><path d="M391 229.300v3.500" stroke-width="2.600"/>
  <path d="M399.300 234.900l2.100-2.100" stroke-width="3"/>
  <path d="M389.600 243.300l1.400-1.500 6 7.200z" fill="#2b2b2b" stroke-width=".6"/>
</g>
<g id="fp-filter">
  <path d="M145 279.300h21.400v1.500l-9.200 9.200v10.400l-3.100-3V290l-9.100-9.200z" stroke="#333" stroke-width="1.600" stroke-linejoin="miter" fill="none"/>
</g>
<path id="fp-chev1" d="M135.800 325.200l7.500 7 7.500-7" stroke="#555" stroke-width="2.800"/>
<path id="fp-chev2" d="M135.800 937.500l7.500 7 7.500-7" stroke="#555" stroke-width="2.800"/>
<g id="fp-origin">
  <circle cx="176.600" cy="367.900" r="4.300" stroke="#555" stroke-width="1"/>
  <circle cx="176.600" cy="367.900" r="1.900" fill="#333"/>
</g>
<g id="fp-planes" stroke="#999" stroke-width="1.300" stroke-linejoin="round">
  <g><path d="M166.800 395.900l20.800 3.500v18.100l-20.800-3.500z" fill="#e8e8e8"/><path d="M177.300 397.600v10l10.300 1.700" fill="none"/></g>
  <g transform="translate(0 39)"><path d="M166.800 395.900l20.800 3.500v18.100l-20.800-3.500z" fill="#e8e8e8"/><path d="M177.300 397.600v10l10.300 1.700" fill="none"/></g>
  <g transform="translate(0 78)"><path d="M166.800 395.900l20.800 3.500v18.100l-20.800-3.500z" fill="#e8e8e8"/><path d="M177.300 397.600v10l10.300 1.700" fill="none"/></g>
</g>
<g id="fp-pencil">
  <path d="M137 534.500h23.100" stroke="#2f63c0" stroke-width="1.250"/>
  <path d="M138.800 533.600L141.350 526.960 155.150 513.240 159.250 517.360 145.450 531.080Z" fill="#f1f8fd" stroke="#3a3a3a" stroke-width="1.050" stroke-linejoin="round"/>
  <path d="M141.350 526.960L145.450 531.080" stroke="#3a3a3a" stroke-width=".9"/>
  <path d="M138.800 533.600L139.800 531.100 141.300 532.600Z" fill="#333"/>
</g>
<g id="fp-tabicon" stroke="#333" fill="none">
  <path d="M458.400 738.600h15.300M454.100 746.200h19.600M454.100 753.700h19.600M454.100 761.200h19.600" stroke-width="1.600"/>
  <path d="M450.900 744.200v19.400" stroke-width="1.900"/>
  <path d="M446.400 737.300l4.500 4.300 4.600-4.300" stroke-width="1.500" stroke-linecap="round"/>
</g>
<!-- ===== dialog icons ===== -->
<g id="dl-check"><path d="M701.300 239.900l8.400 8.900 12.800-14.300" stroke="#fff" stroke-width="4.400" fill="none"/></g>
<g id="dl-x"><path d="M746.600 234.500l14.900 15M761.500 234.500l-14.900 15" stroke="#bf2f3a" stroke-width="4.400"/></g>
<g id="dl-clock" stroke="#222" fill="none">
  <path d="M750.900 290.600V278.400A12.200 12.200 0 0 1 763.100 290.600Z" fill="#ececec" stroke="none"/>
  <circle cx="750.900" cy="290" r="12.400" stroke-width="1.250"/>
  <path d="M750.900 282.100A8.600 8.600 0 1 0 759.500 290.700" stroke-width="1.300"/>
  <path d="M750.900 281.400v9.300h9.300" stroke-width="1.300"/>
</g>
<path id="dl-clear" d="M702.300 313.700l10.600 10.600M712.900 313.700l-10.600 10.600" stroke="#bbb" stroke-width="1.100"/>
<path id="dl-cbcheck" d="M454.800 446.300l3.800 3.900 7-7.600" stroke="#fff" stroke-width="2.400"/>
<g id="dl-help">
  <circle cx="758.400" cy="486.400" r="9.500" fill="#a8a8a8"/>
  <text x="758.500" y="492.700" font-family="Liberation Sans, sans-serif" font-size="17.500" font-weight="700" fill="#fff" text-anchor="middle">?</text>
</g>

<!--ICONS6-->
</svg>
</body>
</html>
